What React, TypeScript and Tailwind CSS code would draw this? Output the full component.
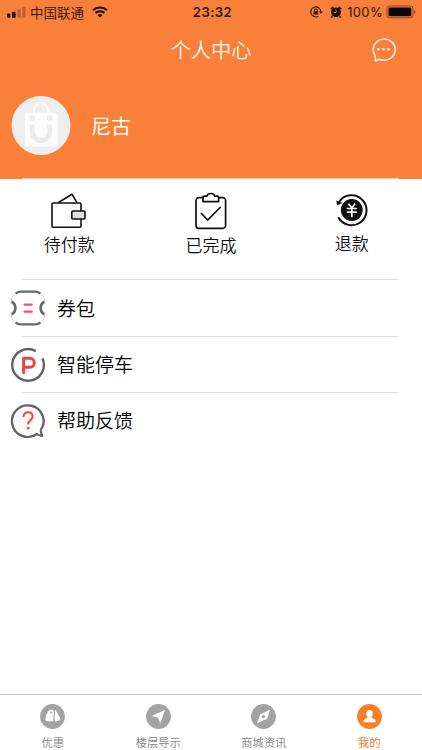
import type { ReactNode } from "react";

function SignalIcon() {
  return (
    <svg width="19" height="12" viewBox="0 0 19 12" className="shrink-0">
      <rect x="0" y="7.5" width="3.4" height="4.2" rx="0.8" fill="#170b08" />
      <rect x="5" y="5.7" width="3.6" height="6" rx="0.8" fill="#170b08" />
      <rect x="10.2" y="3.3" width="3.6" height="8.4" rx="0.8" fill="#b96337" />
      <rect x="15.2" y="1" width="3.4" height="10.7" rx="0.8" fill="#b96337" />
    </svg>
  );
}

function WifiIcon() {
  return (
    <svg width="16" height="12" viewBox="0 0 16 12" fill="none" stroke="#170b08" className="shrink-0">
      <path d="M1 4.3a10.2 10.2 0 0 1 14 0" strokeWidth="2.2" />
      <path d="M3.5 7.1a6.6 6.6 0 0 1 9 0" strokeWidth="2" />
      <path d="M8 11.6 5.6 9.2a3.5 3.5 0 0 1 4.8 0Z" fill="#170b08" stroke="none" />
    </svg>
  );
}

function StatusBar() {
  return (
    <div className="grid h-6 grid-cols-[1fr_auto_1fr] items-center pr-[6px] pl-[7px] text-[#2c130b]">
      <div className="flex items-center">
        <SignalIcon />
        <span className="ml-[4px] text-[13.5px] leading-[22px] font-[350]">中国联通</span>
        <span className="ml-[8px]">
          <WifiIcon />
        </span>
      </div>
      <span className="pt-px pl-[2px] font-['Inter'] text-[13px] font-semibold tracking-[0.5px]">23:32</span>
      <div className="flex items-center justify-end">
        <svg width="13" height="12" viewBox="0 0 13 12" fill="none" stroke="#2c130b">
          <path d="M8.2 10.3A5 5 0 1 1 10.8 5.6" strokeWidth="1.1" />
          <path d="m8.9 5.5 1.9 2.2 1.8-2.2Z" fill="#2c130b" stroke="none" />
          <rect x="3.6" y="5.2" width="4.6" height="3.4" rx=".4" fill="#2c130b" stroke="none" />
          <path d="M4.5 5.2v-1a1.4 1.4 0 0 1 2.8 0v1" />
        </svg>
        <svg width="12" height="12" viewBox="0 0 12 12" className="ml-[7px]">
          <circle cx="6" cy="6.3" r="4.9" fill="#170b08" />
          <path d="M.8 3.1 3.3.9M8.7.9l2.5 2.2M2.4 10.3l-1 1.2M9.6 10.3l1 1.2" stroke="#170b08" strokeWidth="1.5" />
          <path d="M6.1 3.7v2.8H3.9" fill="none" stroke="#f9803a" strokeWidth="1" />
        </svg>
        <span className="ml-[5px] pt-px font-['Inter'] text-[13px] tracking-[0.35px]">100%</span>
        <svg width="30" height="14" viewBox="0 0 30 14" className="ml-[3px]">
          <rect x=".9" y="1" width="26" height="11.8" rx="2.6" fill="none" stroke="#8c4526" strokeWidth="1" />
          <rect x="2.5" y="2.6" width="22.8" height="8.6" rx="1.2" fill="#0d0705" />
          <path d="M28.2 5v4q1.3-.6 1.3-2t-1.3-2Z" fill="#8c4526" />
        </svg>
      </div>
    </div>
  );
}

function ChatIcon() {
  return (
    <svg width="25" height="25" viewBox="0 0 25 25" fill="none" stroke="#fff5e9" strokeWidth="1.5" strokeLinejoin="round">
      <path d="M4.1 18.6A11 10.6 0 1 1 8.4 22.2L4.6 24Z" />
      <g fill="#fff5e9" stroke="none">
        <circle cx="7.5" cy="12.3" r="1.3" />
        <circle cx="12.5" cy="12.3" r="1.3" />
        <circle cx="17.5" cy="12.3" r="1.3" />
      </g>
    </svg>
  );
}

function Avatar() {
  return (
    <svg width="60" height="60" viewBox="0 0 60 60">
      <circle cx="30" cy="30.5" r="29.5" fill="#eeeeee" />
      <path d="M23.2 18v-3a6.8 6.8 0 0 1 13.6 0V18" fill="none" stroke="#fbfbfb" strokeWidth="1.8" />
      <rect x="13.7" y="17.5" width="33" height="34" rx="3.5" fill="#fcfcfc" />
      <path d="M21.2 29.5v7.2a8.8 8.8 0 0 0 17.6 0v-7.2" fill="none" stroke="#ebebeb" strokeWidth="4.8" />
      <circle cx="21.4" cy="23" r="2.8" fill="#ebebeb" />
      <circle cx="38.8" cy="23" r="2.8" fill="#ebebeb" />
    </svg>
  );
}

function WalletIcon() {
  return (
    <svg width="36" height="38" viewBox="0 0 36 38" fill="none" stroke="#111" strokeWidth="1.6" strokeLinejoin="round">
      <path d="M7 10.8 21 2.2l5 8.6" />
      <rect x="1" y="11" width="29" height="24.2" rx="1" />
      <rect x="20.8" y="19" width="13.2" height="8" rx="1" fill="#dedede" />
    </svg>
  );
}

function ClipboardIcon() {
  return (
    <svg width="32" height="38" viewBox="0 0 32 38" fill="none" stroke="#111" strokeWidth="1.7" strokeLinejoin="round">
      <path d="M8 5.7H3.8A2.8 2.8 0 0 0 1 8.5v25A2.8 2.8 0 0 0 3.8 36.3h24a2.8 2.8 0 0 0 2.8-2.8v-25a2.8 2.8 0 0 0-2.8-2.8H23.6" />
      <path d="M8 9.6V5.2q0-1 1-1h2.7q.7-2.7 4.1-2.7t4.1 2.7h2.7q1 0 1 1v4.4Z" />
      <path d="m6 21 6.7 7 12.9-13" strokeLinejoin="miter" />
    </svg>
  );
}

function RefundIcon() {
  return (
    <svg width="34" height="34" viewBox="0 0 34 34" fill="none">
      <path d="M4.2 8.7A15 15 0 1 1 3.3 24.3" stroke="#111" strokeWidth="2" />
      <path d="M1.4 7.6 2 12.4l5.4-2.4Z" fill="#111" />
      <circle cx="16.8" cy="17" r="10.9" fill="#111" />
      <path d="m13.4 10.8 3.4 4 3.4-4M11.8 15.5h10M11.8 19.2h10M16.8 15v9.3" stroke="#fff" strokeWidth="1.7" />
    </svg>
  );
}

function CouponIcon() {
  return (
    <svg width="36" height="36" viewBox="0 0 36 36" fill="none">
      <path d="M4.6 4.5Q1.2 6.5 1.4 11q4.3 3 4.3 7t-4.3 7q-.2 4.5 3.2 6.5M31.4 4.5q3.4 2 3.2 6.5-4.3 3-4.3 7t4.3 7q.2 4.5-3.2 6.5" stroke="#d8d8d8" strokeWidth="1.4" />
      <path d="M5.5 3.8Q7.5 1.6 11 1.6h14q3.5 0 5.5 2.2M5.5 32.2q2 2.2 5.5 2.2h14q3.5 0 5.5-2.2" stroke="#686868" strokeWidth="2.4" />
      <path d="M1.8 11.6Q5.4 14 5.4 18t-3.6 6.4M34.2 11.6Q30.6 14 30.6 18t3.6 6.4" stroke="#686868" strokeWidth="2.6" />
      <path d="M14.6 14.6h7.2M14.6 21.6h7.2" stroke="#f05264" strokeWidth="2.3" strokeLinecap="round" />
    </svg>
  );
}

function ParkingIcon() {
  return (
    <svg width="36" height="36" viewBox="0 0 36 36" fill="none">
      <path d="M25.8 4.1A15.8 15.8 0 1 0 32.4 11.2" stroke="#626262" strokeWidth="2.4" />
      <path d="M13.6 25.8V11.2h6.2a4.5 4.5 0 0 1 0 9h-6.2" stroke="#e9463f" strokeWidth="2.9" strokeLinecap="round" strokeLinejoin="round" />
    </svg>
  );
}

function HelpIcon() {
  return (
    <svg width="36" height="36" viewBox="0 0 36 36" fill="none">
      <path d="M30.6 27.4A15.8 15.8 0 1 0 27 31q2.2 1.9 5.3 1.8-1.2-2.4-1.7-5.4" stroke="#626262" strokeWidth="2.3" strokeLinejoin="round" />
      <path d="M13.5 14q.2-4.7 4.6-4.7t4.5 4.3q0 2-2.4 3.7-2 1.5-2 4.2" stroke="#e94b48" strokeWidth="2.1" />
      <circle cx="18.2" cy="25.2" r="1.4" fill="#e94b48" />
    </svg>
  );
}

const orders = [
  { label: "待付款", icon: <WalletIcon />, style: "pt-[13px] pr-[2px]", gap: "mt-[2px]" },
  { label: "已完成", icon: <ClipboardIcon />, style: "pt-[13px]", gap: "mt-[3px]" },
  { label: "退款", icon: <RefundIcon />, style: "pt-[14px]", gap: "mt-[4px]" },
];

const menu = [
  { label: "券包", icon: <CouponIcon />, height: "h-[56px]" },
  { label: "智能停车", icon: <ParkingIcon />, height: "h-[55px]" },
  { label: "帮助反馈", icon: <HelpIcon />, height: "h-[55px]" },
];

const tabs: { label: string; active?: boolean; glyph: ReactNode }[] = [
  {
    label: "优惠",
    glyph: (
      <>
        <path d="M8 7.4q1.8-2 3.6-2 2 .4 2.3 2.6.3 2.5-.4 4.4-.5 2.2.3 4.6-4.4 1.2-8.6-.8.4-4.7 2.8-8.8Z" fill="#fff" />
        <path d="M14.4 6.2q1.6 0 2.3 1.4l4 7.6q-2.3 1.8-5.2 2.2-1.4-2.2-.7-5 .8-3.2-.4-6.2Z" fill="#fff" />
        <circle cx="11" cy="8.6" r=".9" fill="#a3a3a3" />
      </>
    ),
  },
  { label: "楼层导示", glyph: <path d="m19 6-4.6 13-2.6-5.4-6.2-1.5Z" fill="#fff" /> },
  {
    label: "商城资讯",
    glyph: (
      <>
        <path d="m19.2 5.8-3 9-10.2 4.4 3.2-8.9Z" fill="#fff" />
        <circle cx="12.5" cy="12.6" r="1.7" fill="#a3a3a3" />
      </>
    ),
  },
  {
    label: "我的",
    active: true,
    glyph: (
      <path d="M12.5 6q3.3 0 3.3 3.7 0 2-1.5 3.2v.7l3.6 1.8q.8.4.8 2.9H6.3q0-2.5.8-2.9l3.6-1.8v-.7Q9.2 11.7 9.2 9.7 9.2 6 12.5 6Z" fill="#fff" />
    ),
  },
];

export default function App() {
  return (
    <div className="flex h-[750px] w-[422px] flex-col overflow-hidden bg-white font-['Noto_Sans_CJK_SC',sans-serif]">
      <header className="h-[179px] shrink-0 bg-[#f9803a]">
        <StatusBar />
        <div className="grid h-[50px] grid-cols-[1fr_auto_1fr] items-center pr-[26px] pl-[26px] text-[#fff5e9]">
          <span />
          <h1 className="text-[20.3px] font-[350]">个人中心</h1>
          <div className="flex justify-end">
            <ChatIcon />
          </div>
        </div>
        <div className="flex items-center gap-[20px] pt-[21px] pl-[11px]">
          <Avatar />
          <span className="pt-px text-[20px] text-[#fffaf0]">尼古</span>
        </div>
        <div className="mr-[23px] ml-[22px] mt-[23px] h-px bg-[#fbc8a8]" />
      </header>

      <section className="grid h-[100px] shrink-0 grid-cols-3">
        {orders.map((o) => (
          <div key={o.label} className={`flex flex-col items-center ${o.style}`}>
            {o.icon}
            <span className={`text-[17px] leading-6 font-[350] text-[#111] ${o.gap}`}>{o.label}</span>
          </div>
        ))}
      </section>

      <main className="flex-1">
        {menu.map((m) => (
          <div key={m.label}>
            <div className="mr-[23px] ml-[22px] h-px bg-[#dfdfdf]" />
            <div className={`flex items-center gap-[11px] pl-[10px] ${m.height}`}>
              {m.icon}
              <span className="text-[19px] font-[350] text-black">{m.label}</span>
            </div>
          </div>
        ))}
      </main>

      <nav className="grid h-[56px] shrink-0 grid-cols-4 border-t border-[#c8c8c8]">
        {tabs.map((t) => (
          <div key={t.label} className="flex flex-col items-center pt-[9px]">
            <svg width="25" height="25" viewBox="0 0 25 25">
              <circle cx="12.5" cy="12.5" r="12.4" fill={t.active ? "#fa7f25" : "#a3a3a3"} />
              {t.glyph}
            </svg>
            <span className={`mt-[5px] text-[11.3px] leading-4 ${t.active ? "text-[#ee7e30]" : "font-[350] text-[#858585]"}`}>
              {t.label}
            </span>
          </div>
        ))}
      </nav>
    </div>
  );
}
